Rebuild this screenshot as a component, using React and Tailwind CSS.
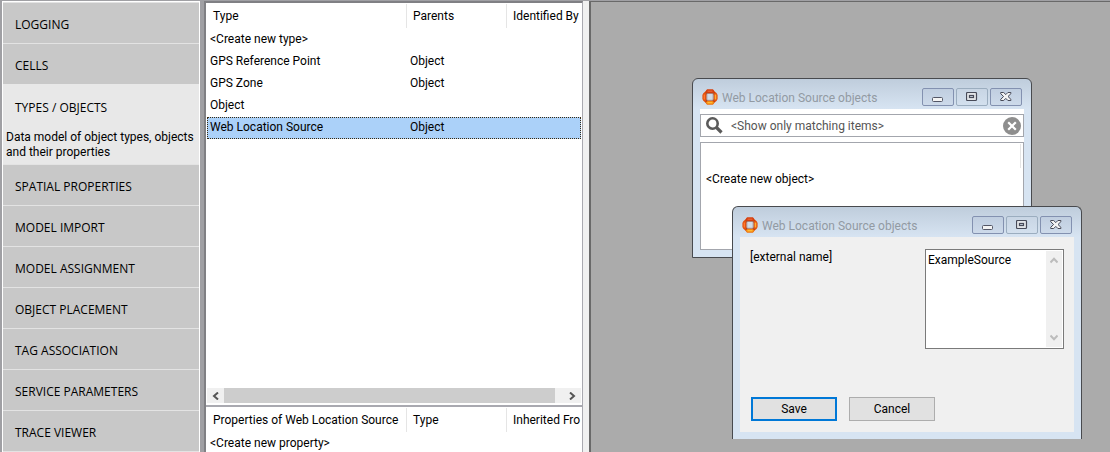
import React from "react";

const sections = [
  { name: "LOGGING" },
  { name: "CELLS" },
  {
    name: "TYPES / OBJECTS",
    description: "Data model of object types, objects and their properties",
  },
  { name: "SPATIAL PROPERTIES" },
  { name: "MODEL IMPORT" },
  { name: "MODEL ASSIGNMENT" },
  { name: "OBJECT PLACEMENT" },
  { name: "TAG ASSOCIATION" },
  { name: "SERVICE PARAMETERS" },
  { name: "TRACE VIEWER" },
];

const types = [
  { name: "<Create new type>", parent: "" },
  { name: "GPS Reference Point", parent: "Object" },
  { name: "GPS Zone", parent: "Object" },
  { name: "Object", parent: "" },
  { name: "Web Location Source", parent: "Object", selected: true },
];

function Sidebar() {
  return (
    <nav className="w-[198px] shrink-0 border-x border-t border-white bg-[#c8c8c8]">
      {sections.map((s) => (
        <button
          key={s.name}
          type="button"
          className={
            s.description
              ? "block h-20 w-full bg-[#e8e8e8] text-left"
              : "block h-[41px] w-full border-t border-[#e3e3e3] text-left"
          }
        >
          <span
            className={
              s.description
                ? "block px-3 pt-3 font-['Open_Sans',sans-serif]"
                : "block px-3 pt-1 font-['Open_Sans',sans-serif]"
            }
          >
            {s.name}
          </span>
          {s.description && (
            <span className="block pt-3.5 pl-[3px] leading-[15px]">{s.description}</span>
          )}
        </button>
      ))}
      <div className="h-px bg-[#e3e3e3]" />
    </nav>
  );
}

function DataTable({ columns, rows }) {
  return (
    <table className="w-full table-fixed border-collapse">
      <colgroup>
        <col className="w-[200px]" />
        <col className="w-[100px]" />
        <col />
      </colgroup>
      <thead>
        <tr>
          {columns.map((c, i) => (
            <th key={c} scope="col" className="h-[25px] p-0 py-px text-left font-normal whitespace-nowrap">
              <div
                className={
                  i < columns.length - 1
                    ? "h-6 border-r border-[#e5e5e5] pl-1.5 leading-6"
                    : "h-6 pl-1.5 leading-6"
                }
              >
                {c}
              </div>
            </th>
          ))}
        </tr>
      </thead>
      <tbody>
        {rows.map((r) => (
          <tr
            key={r.name}
            className={r.selected ? "bg-[#abd1f9] outline-1 -outline-offset-1 outline-dotted outline-[#3a2a10]" : ""}
          >
            <td className="h-[22px] p-0 pb-0.5 pl-[3px] whitespace-nowrap">{r.name}</td>
            <td className="h-[22px] p-0 pb-0.5 pl-[3px]">{r.parent}</td>
            <td className="h-[22px] p-0"></td>
          </tr>
        ))}
      </tbody>
    </table>
  );
}

function HorizontalScrollbar() {
  return (
    <div className="mt-auto mb-0.5 flex h-[15px] bg-[#f0f0f0]">
      <button type="button" aria-label="Scroll left" className="flex w-[17px] items-center justify-center">
        <svg width="7" height="8" viewBox="0 0 7 8" fill="none" stroke="#555" strokeWidth="2">
          <path d="M6 .5 2 4l4 3.5" />
        </svg>
      </button>
      <div className="flex-1 bg-[#cdcdcd]" />
      <button type="button" aria-label="Scroll right" className="flex w-[26px] items-center justify-end pr-[5px]">
        <svg width="7" height="8" viewBox="0 0 7 8" fill="none" stroke="#555" strokeWidth="2">
          <path d="M1 .5 5 4 1 7.5" />
        </svg>
      </button>
    </div>
  );
}

function AppIcon() {
  return (
    <svg width="16" height="16" viewBox="0 0 16 16" className="shrink-0">
      <path
        fillRule="evenodd"
        d="M5 .4h6l1.700 2 2 1.800.9 1.800v4l-.9 1.800-2 1.800-1.700 2H5l-1.700-2-2-1.800L.4 10V6l.9-1.800 2-1.800zM6 4.500 4.500 6v4L6 11.500h4l1.500-1.500V6L10 4.500z"
        fill="#e2500f"
      />
      <path d="M5 .6h6l1.200 1.900L10.500 4h-5L3.800 2.500z" fill="#d23c10" />
      <path d="M5.500 2.200h5" stroke="#f0703a" strokeWidth="1" />
      <path d="M5 15.400h6l1.200-1.900-1.700-1.500h-5l-1.700 1.500z" fill="#f4860f" />
      <path d="M5.500 13.700h5" stroke="#ffc03a" strokeWidth="1.200" />
      <path d="M2.300 5.500v5" stroke="#ff7a30" strokeWidth="1.400" />
      <path d="M13.500 5.500v5" stroke="#ffb030" strokeWidth="1.600" />
      <path d="M3.600 3.300 5 4.700m7.400-1.400L11 4.700M3.600 12.700 5 11.300m7.400 1.400L11 11.300" stroke="#8e2a08" strokeWidth=".8" />
      <path d="M4.800 4.500h6.400v6.800H4.800z" fill="#d0dae6" stroke="#9b6b60" strokeWidth=".7" />
    </svg>
  );
}

function CaptionButton({ label, muted, children }) {
  return (
    <button
      type="button"
      aria-label={label}
      className={
        muted
          ? "flex h-[18px] w-8 items-center justify-center rounded-xs border border-[#9badbf] bg-linear-to-b from-[#c8d5e4] to-[#d3e0ee]"
          : "flex h-[18px] w-8 items-center justify-center rounded-xs border border-[#8391b0] bg-linear-to-b from-[#c0cee0] to-[#cddaea]"
      }
    >
      {children}
    </button>
  );
}

function TitleBar({ title }) {
  return (
    <header className="flex h-[30px] items-start gap-1 px-0.5">
      <div className="pt-2.5">
        <AppIcon />
      </div>
      <h2 className="flex-1 pt-[11px] whitespace-nowrap text-[#929aa3]">{title}</h2>
      <div className="flex gap-0.5 pt-[9px]">
        <CaptionButton label="Minimize">
          <svg width="12" height="12" viewBox="0 0 12 12">
            <rect x=".5" y="6.500" width="10" height="4" rx="1" fill="#f4f4f4" stroke="#535666" />
          </svg>
        </CaptionButton>
        <CaptionButton label="Maximize" muted>
          <svg width="12" height="10" viewBox="0 0 12 10">
            <rect x=".5" y=".5" width="10" height="8" rx="1" fill="#e2e5e8" stroke="#474a58" strokeWidth="1.200" />
            <rect x="3.500" y="3.500" width="4" height="2" fill="#d3deea" stroke="#474a58" strokeWidth="1.200" />
          </svg>
        </CaptionButton>
        <CaptionButton label="Close">
          <svg width="12" height="10" viewBox="0 0 12 10">
            <path
              d="M.7.500h3L5.800 2.600 7.900.500h3v1.200L8 4.500l2.900 2.800v1.200h-3L5.800 6.400 3.700 8.500h-3V7.300L3.600 4.500.7 1.700z"
              fill="#f4f4f4"
              stroke="#474a58"
            />
          </svg>
        </CaptionButton>
      </div>
    </header>
  );
}

function ObjectListWindow() {
  return (
    <section className="absolute top-[76px] left-[101px] w-[340px] rounded-t-md border border-[#484a4e] bg-linear-to-b from-[#bfcddc] to-[#d7e4f2] to-[30px] px-[7px] pb-[7px]">
      <TitleBar title="Web Location Source objects" />
      <div className="bg-white pt-[5px]">
        <div className="flex h-[23px] items-center border border-[#a3a6ad] pr-0.5 pl-[5px]">
          <svg width="17" height="17" viewBox="0 0 17 17" fill="none" stroke="#5a5a5a" className="shrink-0">
            <circle cx="6.500" cy="6.500" r="5.200" strokeWidth="2.600" />
            <path d="m10.500 10.500 5 5" strokeWidth="3.200" />
          </svg>
          <input
            type="text"
            aria-label="Filter objects"
            placeholder="<Show only matching items>"
            className="ml-2 min-w-0 flex-1 bg-transparent outline-none placeholder:text-[#555]"
          />
          <button type="button" aria-label="Clear filter">
            <svg width="18" height="18" viewBox="0 0 18 18">
              <circle cx="9" cy="9" r="9" fill="#8e8e8e" />
              <path d="m5.200 5.200 7.600 7.600m0-7.600-7.600 7.600" stroke="#fff" strokeWidth="2.200" />
            </svg>
          </button>
        </div>
        <div className="mt-[5px] h-[108px] border border-[#a3a6ad] p-px">
          <div className="mr-px h-6 border-r border-[#e5e5e5]" />
          <button type="button" className="block h-[22px] pl-1">
            &lt;Create new object&gt;
          </button>
        </div>
      </div>
    </section>
  );
}

function ObjectEditWindow() {
  return (
    <section className="absolute top-[204px] left-[141px] w-[350px] rounded-t-md border border-b-0 border-[#484a4e] bg-linear-to-b from-[#bfcddc] to-[#d7e4f2] to-[30px] px-[7px] pb-[7px]">
      <TitleBar title="Web Location Source objects" />
      <form className="bg-[#f0f0f0] px-2.5 pt-3 pb-[11px]" onSubmit={(e) => e.preventDefault()}>
        <div className="flex items-start justify-between">
          <label htmlFor="external-name">[external name]</label>
          <div className="relative h-[100px] w-[139px] border border-[#7a7a7a] bg-white">
            <textarea
              id="external-name"
              defaultValue="ExampleSource"
              className="block h-full w-full resize-none overflow-hidden pt-0.5 pr-4 pl-0.5 outline-none"
            />
            <div className="absolute inset-y-px right-px flex w-4 flex-col items-center justify-between bg-[#f0f0f0] py-1.5">
              <svg width="8" height="7" viewBox="0 0 8 7" fill="none" stroke="#bcbcbc" strokeWidth="2">
                <path d="M.5 5.500 4 1.800l3.500 3.700" />
              </svg>
              <svg width="8" height="7" viewBox="0 0 8 7" fill="none" stroke="#bcbcbc" strokeWidth="2">
                <path d="M.5 1.500 4 5.200l3.500-3.700" />
              </svg>
            </div>
          </div>
        </div>
        <div className="mt-12 flex gap-3 pl-px">
          <button type="submit" className="h-6 w-[86px] border-2 border-[#0078d7] bg-[#e1e1e1]">
            Save
          </button>
          <button type="button" className="h-6 w-[86px] border border-[#adadad] bg-[#e1e1e1]">
            Cancel
          </button>
        </div>
      </form>
    </section>
  );
}

export default function App() {
  return (
    <div className="flex min-h-screen bg-[#a0a0a4] pt-px pl-0.5 font-[Roboto,'Open_Sans',sans-serif] text-[12px] leading-4 text-black">
      <Sidebar />
      <div className="ml-1 flex w-[379px] shrink-0 flex-col border-t-2 border-r border-l-2 border-[#808084] border-r-[#a9a9b0] bg-white">
        <div className="flex h-[402px] flex-col px-px">
          <DataTable columns={["Type", "Parents", "Identified By"]} rows={types} />
          <HorizontalScrollbar />
        </div>
        <div className="flex-1 border-t-2 border-[#a9a9b0] px-px">
          <DataTable
            columns={["Properties of Web Location Source", "Type", "Inherited Fro"]}
            rows={[{ name: "<Create new property>", parent: "" }]}
          />
        </div>
      </div>
      <div className="w-1.5 shrink-0 bg-[#f0f0f0]" />
      <main className="relative flex-1 border-t border-l-2 border-[#696969] bg-[#ababab]">
        <ObjectListWindow />
        <ObjectEditWindow />
      </main>
    </div>
  );
}
